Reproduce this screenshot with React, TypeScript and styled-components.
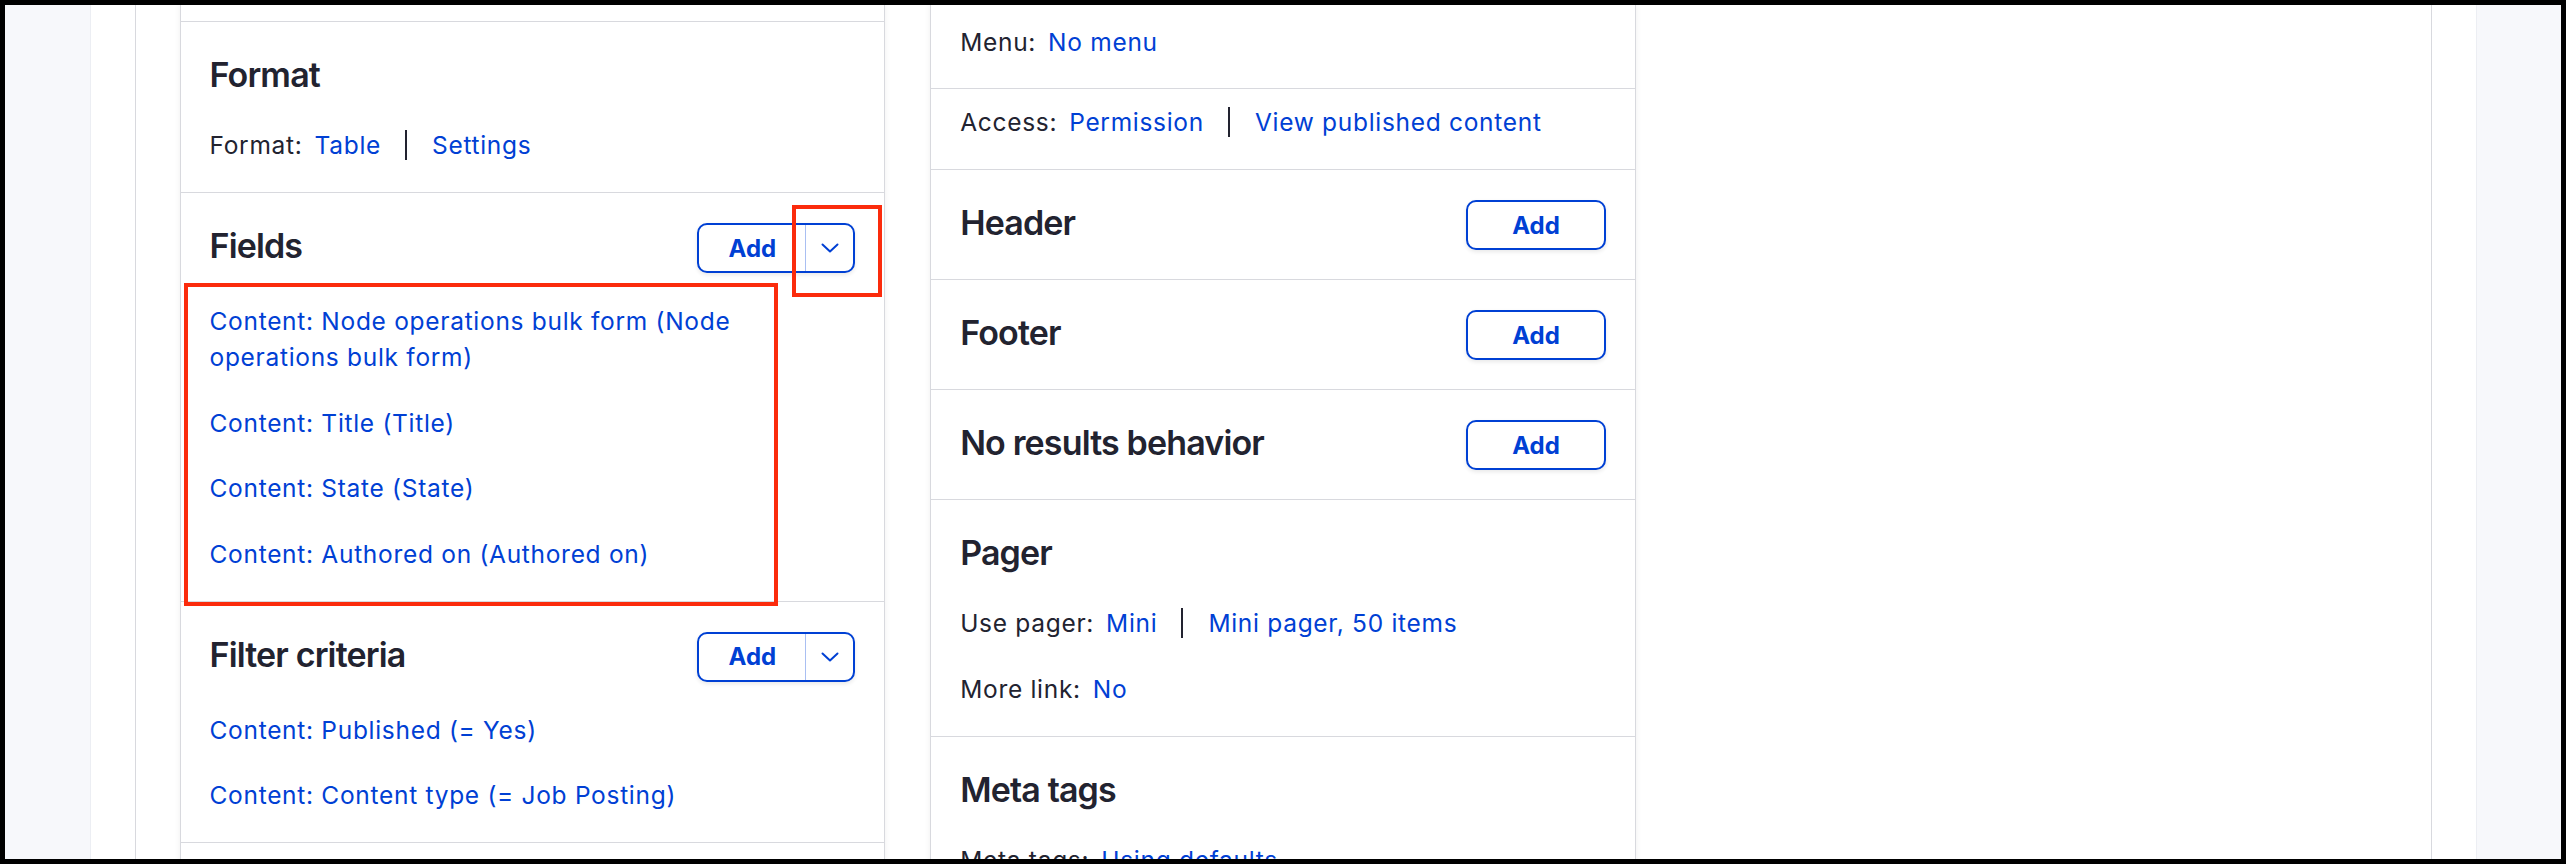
import React from "react";
import styled, { createGlobalStyle } from "styled-components";

const colors = {
  text: "#222330",
  link: "#0040d4",
  border: "#d8d9de",
  canvas: "#f7f8fb",
  split: "#a9bff2",
  highlight: "#fb2b0c",
};

const GlobalStyle = createGlobalStyle`
  html, body {
    margin: 0;
    padding: 0;
  }
  body {
    font-family: Inter, "Noto Sans", "Liberation Sans", sans-serif;
    color: ${colors.text};
    -webkit-font-smoothing: antialiased;
  }
  *, *::before, *::after {
    box-sizing: border-box;
  }
`;

const Frame = styled.div`
  position: relative;
  width: 2566px;
  height: 864px;
  border: 5px solid #000;
  background: ${colors.canvas};
  overflow: hidden;
`;

const Page = styled.main`
  width: 2385px;
  height: 100%;
  margin: 0 auto;
  padding: 0 44px;
  background: #fff;
  box-shadow: 0 0 0 1px #eceef3;
`;

const Display = styled.div`
  height: 100%;
  display: grid;
  grid-template-columns: repeat(3, minmax(0, 1fr));
  column-gap: 45px;
  align-items: start;
  padding: 0 44px;
  border-left: 1px solid ${colors.border};
  border-right: 1px solid ${colors.border};
`;

/* the view is scrolled, so the panels have no visible top edge */
const Panel = styled.section`
  background: #fff;
  border: 1px solid ${colors.border};
  border-top: 0;
  box-shadow: 0 0 6px rgba(0, 0, 0, 0.07);
`;

const Stub = styled.div<{ $h: number }>`
  height: ${(p) => p.$h}px;
  border-bottom: 1px solid ${colors.border};
`;

const Bucket = styled.div`
  display: flex;
  flex-direction: column;
  gap: 30px;
  padding: 30px 29px 29px;
  border-bottom: 1px solid ${colors.border};
`;

const SettingRow = styled.div<{ $pt: number; $pb: number }>`
  padding: ${(p) => p.$pt}px 29px ${(p) => p.$pb}px;
  border-bottom: 1px solid ${colors.border};
`;

const BucketHeader = styled.div`
  display: flex;
  align-items: flex-start;
  justify-content: space-between;
`;

const Heading = styled.h2`
  margin: 0;
  font-size: 34px;
  line-height: 45px;
  font-weight: 600;
  letter-spacing: -0.85px;
  color: ${colors.text};
`;

const SettingLine = styled.div`
  font-size: 24.5px;
  line-height: 36px;
  letter-spacing: 0.7px;
  color: ${colors.text};
`;

const Label = styled.span`
  margin-right: 12px;
`;

const Link = styled.a`
  color: ${colors.link};
  text-decoration: none;
  cursor: pointer;
`;

const Separator = styled.span`
  display: inline-block;
  width: 2px;
  height: 30px;
  margin: 0 25px 0 24px;
  vertical-align: -6px;
  background: ${colors.text};
`;

const ItemList = styled.div`
  display: flex;
  flex-direction: column;
  gap: 29.5px;
`;

const Item = styled.a`
  display: block;
  font-size: 24.5px;
  line-height: 36px;
  letter-spacing: 0.7px;
  color: ${colors.link};
  text-decoration: none;
  cursor: pointer;
`;

const AddButton = styled.button`
  flex: none;
  height: 50px;
  padding: 0 44px;
  border: 2px solid ${colors.link};
  border-radius: 10px;
  background: #fff;
  color: ${colors.link};
  font-family: inherit;
  font-size: 24px;
  font-weight: 700;
  box-shadow: 0 2px 4px rgba(0, 0, 0, 0.09);
  cursor: pointer;
`;

const SplitButton = styled.div`
  flex: none;
  display: inline-flex;
  height: 50px;
  border: 2px solid ${colors.link};
  border-radius: 10px;
  background: #fff;
  overflow: hidden;
  box-shadow: 0 2px 4px rgba(0, 0, 0, 0.09);
`;

const SplitMain = styled.button`
  padding: 0 29px 0 30px;
  border: 0;
  background: transparent;
  color: ${colors.link};
  font-family: inherit;
  font-size: 24px;
  font-weight: 700;
  cursor: pointer;
`;

const SplitToggle = styled.button`
  display: flex;
  align-items: center;
  justify-content: center;
  width: 48px;
  padding: 0;
  border: 0;
  border-left: 1px solid ${colors.split};
  background: transparent;
  color: ${colors.link};
  cursor: pointer;
`;

const Highlight = styled.div<{ $x: number; $y: number; $w: number; $h: number }>`
  position: absolute;
  left: ${(p) => p.$x}px;
  top: ${(p) => p.$y}px;
  width: ${(p) => p.$w}px;
  height: ${(p) => p.$h}px;
  border: 4px solid ${colors.highlight};
  pointer-events: none;
`;

const Chevron = () => (
  <svg width="18" height="10" viewBox="0 0 18 10" fill="none">
    <polyline
      points="1.5,1.5 9,8.5 16.5,1.5"
      stroke="currentColor"
      strokeWidth="2"
      strokeLinecap="round"
      strokeLinejoin="round"
    />
  </svg>
);

const Split = () => (
  <SplitButton>
    <SplitMain>Add</SplitMain>
    <SplitToggle aria-label="More actions">
      <Chevron />
    </SplitToggle>
  </SplitButton>
);

type Part = { label: string; links: string[] };

const Setting = ({ label, links }: Part) => (
  <SettingLine>
    <Label>{label}:</Label>
    {links.map((l, i) => (
      <React.Fragment key={l}>
        {i > 0 && <Separator />}
        <Link>{l}</Link>
      </React.Fragment>
    ))}
  </SettingLine>
);

const fields = [
  "Content: Node operations bulk form (Node operations bulk form)",
  "Content: Title (Title)",
  "Content: State (State)",
  "Content: Authored on (Authored on)",
];

const filters = ["Content: Published (= Yes)", "Content: Content type (= Job Posting)"];

export default function App() {
  return (
    <>
      <GlobalStyle />
      <Frame>
        <Page>
          <Display>
            <Panel>
              <Stub $h={17} />
              <Bucket>
                <BucketHeader>
                  <Heading>Format</Heading>
                </BucketHeader>
                <Setting label="Format" links={["Table", "Settings"]} />
              </Bucket>
              <Bucket>
                <BucketHeader>
                  <Heading>Fields</Heading>
                  <Split />
                </BucketHeader>
                <ItemList>
                  {fields.map((f) => (
                    <Item key={f}>{f}</Item>
                  ))}
                </ItemList>
              </Bucket>
              <Bucket>
                <BucketHeader>
                  <Heading>Filter criteria</Heading>
                  <Split />
                </BucketHeader>
                <ItemList>
                  {filters.map((f) => (
                    <Item key={f}>{f}</Item>
                  ))}
                </ItemList>
              </Bucket>
              <Bucket>
                <BucketHeader>
                  <Heading>Sort criteria</Heading>
                  <Split />
                </BucketHeader>
              </Bucket>
            </Panel>

            <Panel>
              <SettingRow $pt={19} $pb={28}>
                <Setting label="Menu" links={["No menu"]} />
              </SettingRow>
              <SettingRow $pt={15} $pb={29}>
                <Setting label="Access" links={["Permission", "View published content"]} />
              </SettingRow>
              <Bucket>
                <BucketHeader>
                  <Heading>Header</Heading>
                  <AddButton>Add</AddButton>
                </BucketHeader>
              </Bucket>
              <Bucket>
                <BucketHeader>
                  <Heading>Footer</Heading>
                  <AddButton>Add</AddButton>
                </BucketHeader>
              </Bucket>
              <Bucket>
                <BucketHeader>
                  <Heading>No results behavior</Heading>
                  <AddButton>Add</AddButton>
                </BucketHeader>
              </Bucket>
              <Bucket>
                <BucketHeader>
                  <Heading>Pager</Heading>
                </BucketHeader>
                <Setting label="Use pager" links={["Mini", "Mini pager, 50 items"]} />
                <Setting label="More link" links={["No"]} />
              </Bucket>
              <Bucket>
                <BucketHeader>
                  <Heading>Meta tags</Heading>
                </BucketHeader>
                <Setting label="Meta tags" links={["Using defaults"]} />
              </Bucket>
            </Panel>

            <div />
          </Display>
        </Page>

        <Highlight $x={179} $y={278} $w={594} $h={323} />
        <Highlight $x={787} $y={200} $w={90} $h={92} />
      </Frame>
    </>
  );
}
